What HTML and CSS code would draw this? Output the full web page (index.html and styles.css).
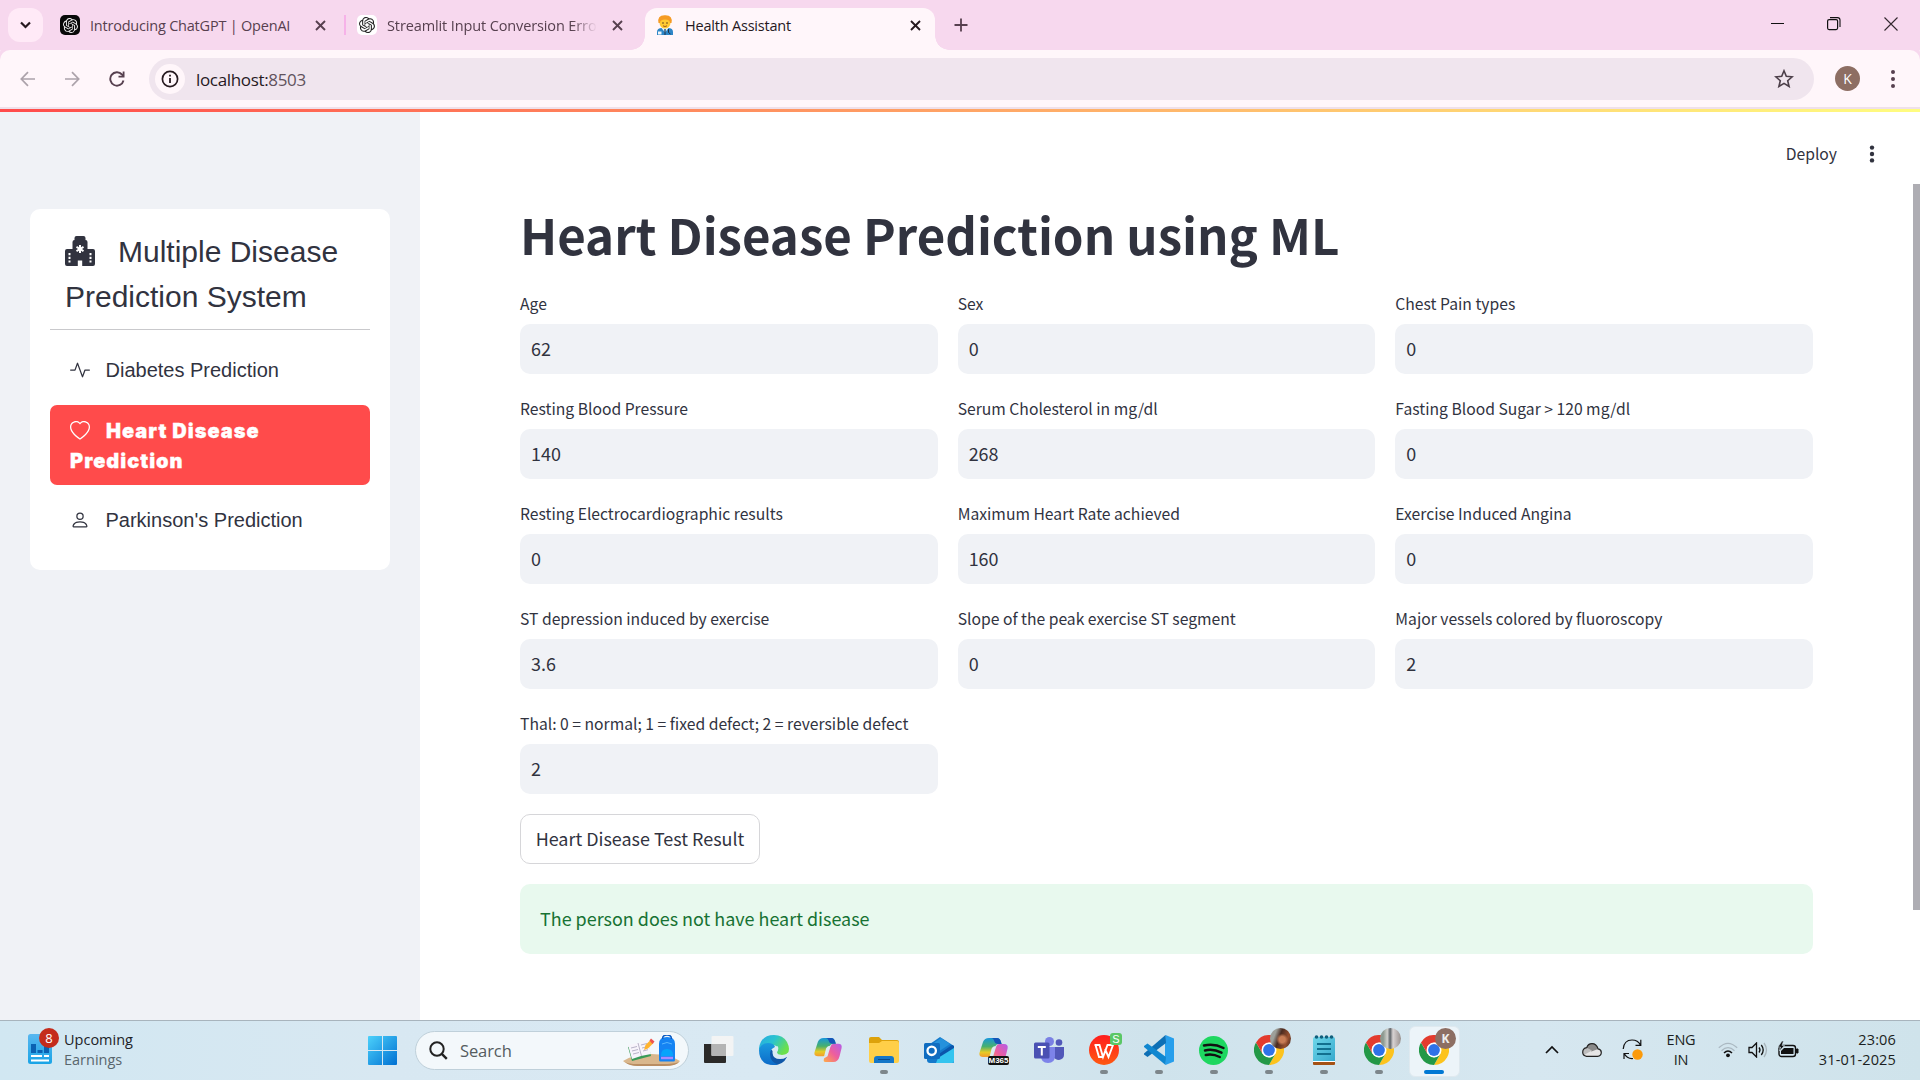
FILE: index.html
```html
<!DOCTYPE html>
<html lang="en">
<head>
<meta charset="utf-8">
<title>Health Assistant</title>
<link rel="stylesheet" href="styles.css">
</head>
<body>
<svg width="0" height="0" class="defs">
  <defs>
    <symbol id="openai" viewBox="0 0 24 24"><path fill="currentColor" d="M22.2819 9.8211a5.9847 5.9847 0 0 0-.5157-4.9108 6.0462 6.0462 0 0 0-6.5098-2.9A6.0651 6.0651 0 0 0 4.9807 4.1818a5.9847 5.9847 0 0 0-3.9977 2.9 6.0462 6.0462 0 0 0 .7427 7.0966 5.98 5.98 0 0 0 .511 4.9107 6.051 6.051 0 0 0 6.5146 2.9001A5.9847 5.9847 0 0 0 13.2599 24a6.0557 6.0557 0 0 0 5.7718-4.2058 5.9894 5.9894 0 0 0 3.9977-2.9001 6.0557 6.0557 0 0 0-.7475-7.0729zm-9.022 12.6081a4.4755 4.4755 0 0 1-2.8764-1.0408l.1419-.0804 4.7783-2.7582a.7948.7948 0 0 0 .3927-.6813v-6.7369l2.02 1.1686a.071.071 0 0 1 .038.052v5.5826a4.504 4.504 0 0 1-4.4945 4.4944zm-9.6607-4.1254a4.4708 4.4708 0 0 1-.5346-3.0137l.142.0852 4.783 2.7582a.7712.7712 0 0 0 .7806 0l5.8428-3.3685v2.3324a.0804.0804 0 0 1-.0332.0615L9.74 19.9502a4.4992 4.4992 0 0 1-6.1408-1.6464zM2.3408 7.8956a4.485 4.485 0 0 1 2.3655-1.9728V11.6a.7664.7664 0 0 0 .3879.6765l5.8144 3.3543-2.0201 1.1685a.0757.0757 0 0 1-.071 0l-4.8303-2.7865A4.504 4.504 0 0 1 2.3408 7.872zm16.5963 3.8558L13.1038 8.364 15.1192 7.2a.0757.0757 0 0 1 .071 0l4.8303 2.7913a4.4944 4.4944 0 0 1-.6765 8.1042v-5.6772a.79.79 0 0 0-.407-.667zm2.0107-3.0231l-.142-.0852-4.7735-2.7818a.7759.7759 0 0 0-.7854 0L9.409 9.2297V6.8974a.0662.0662 0 0 1 .0284-.0615l4.8303-2.7866a4.4992 4.4992 0 0 1 6.6802 4.66zM8.3065 12.863l-2.02-1.1638a.0804.0804 0 0 1-.038-.0567V6.0742a4.4992 4.4992 0 0 1 7.3757-3.4537l-.142.0805L8.704 5.459a.7948.7948 0 0 0-.3927.6813zm1.0976-2.3654l2.602-1.4998 2.6069 1.4998v2.9994l-2.5974 1.4997-2.6067-1.4997Z"/></symbol>
    <symbol id="close" viewBox="0 0 10 10"><path d="M.9.9l8.2 8.2M9.1.9L.9 9.1" stroke="currentColor" stroke-width="1.7"/></symbol>
    <symbol id="chrome" viewBox="0 0 30 30">
      <path d="M15 7.5H28A15 15 0 0 1 15 30L21.5 18.7Z" fill="#fcc31e"/>
      <path d="M2 7.5L8.5 18.7 15 22.5 21.3 19 15 30A15 15 0 0 1 2 7.5Z" fill="#239847"/>
      <path d="M2 7.5A15 15 0 0 1 28 7.5H15L8.5 11.3 8.5 18.7Z" fill="#e33b2e"/>
      <circle cx="15" cy="15" r="7.5" fill="#fff"/><circle cx="15" cy="15" r="5.9" fill="#2f72e8"/>
    </symbol>
    <linearGradient id="rb" x1="0" y1="0" x2="0" y2="1"><stop offset="0" stop-color="#1797dc"/><stop offset=".45" stop-color="#47b06d"/><stop offset=".75" stop-color="#e7cc25"/><stop offset="1" stop-color="#f39a2d"/></linearGradient>
    <linearGradient id="rp" x1="1" y1="0" x2="0" y2="1"><stop offset="0" stop-color="#b45de9"/><stop offset=".5" stop-color="#ee5e9d"/><stop offset="1" stop-color="#ffad45"/></linearGradient>
    <symbol id="copilot" viewBox="0 0 30 27">
      <path d="M20 7h5q4.500 0 3.600 4.500L26.500 20Q25 26 20 26h-8q-3 0-1.500-4L14 20l3-10q1-3 3-3Z" fill="url(#rp)"/>
      <path d="M10 1h8q3 0 4 4l.6 2H20q-3 0-4 3l-2.500 7q-1 3-4 3H4q-4.500 0-3.400-4.500L4 5Q5.500 1 10 1Z" fill="url(#rb)"/>
      <path d="M12 1h6q3 0 4 4l.6 2H19q-3 0-3.800-3Q14.500 1 12 1Z" fill="#1455b8"/>
      <path d="M17 9l-3.500 10-3 1 2-8q1-3 4.500-3Z" fill="#dcebf2"/>
    </symbol>
  </defs>
</svg>

<header class="tabs">
  <button class="tab-search"><svg width="11" height="8" viewBox="0 0 11 8"><path d="M1 1.500l4.500 4.500L10 1.500" fill="none" stroke="#26191f" stroke-width="2.200"/></svg></button>
  <div class="tab first"><span class="fav dark"><svg width="15" height="15"><use href="#openai"/></svg></span><span class="tt t1">Introducing ChatGPT | OpenAI</span><svg class="x" width="11" height="11"><use href="#close"/></svg></div>
  <i class="sep"></i>
  <div class="tab second"><span class="fav light"><svg width="16" height="16"><use href="#openai"/></svg></span><span class="tt t2">Streamlit Input Conversion Error</span><svg class="x" width="11" height="11"><use href="#close"/></svg></div>
  <div class="tab active">
    <svg class="doc" width="18" height="21" viewBox="0 0 18 21"><path d="M1 20v-3q0-4 5-4h6q5 0 5 4v3Z" fill="#2d86c7"/><path d="M5.500 13L9 17.500 12.500 13Z" fill="#e9f3f8"/><path d="M8.300 14h1.400v6H8.300Z" fill="#24496b"/><rect x="2" y="16.500" width="3.500" height="3" fill="#f0f6fa"/><path d="M12.500 14v3.500l2 1.500" stroke="#1d2e41" fill="none"/><circle cx="9" cy="8" r="5.500" fill="#ffcb32"/><path d="M2.500 8Q1 0 9 .3 17 0 15.500 8L14 8Q14 4.500 9 4.500T4 8Z" fill="#f59b24"/><circle cx="7" cy="8" r=".8" fill="#5b3b17"/><circle cx="11" cy="8" r=".8" fill="#5b3b17"/><path d="M7 10.800q2 1.500 4 0" stroke="#a45a16" fill="none"/></svg>
    <span class="tt t3">Health Assistant</span><svg class="x" width="11" height="11"><use href="#close"/></svg>
  </div>
  <svg class="plus" width="14" height="14" viewBox="0 0 14 14"><path d="M7 .5v13M.5 7h13" stroke="#57404f" stroke-width="1.800"/></svg>
  <div class="win">
    <svg width="14" height="14" viewBox="0 0 14 14"><path d="M1 6.500h13" stroke="#111"/></svg>
    <svg width="14" height="14" viewBox="0 0 14 14"><rect x=".6" y="2.600" width="10" height="10" rx="1.500" fill="none" stroke="#111" stroke-width="1.200"/><path d="M3 .6h7.500q2.500 0 2.500 2.500V10" fill="none" stroke="#111" stroke-width="1.100"/></svg>
    <svg width="14" height="14" viewBox="0 0 14 14"><path d="M.5.5l13 13M13.500.5l-13 13" stroke="#33272e" stroke-width="1.100"/></svg>
  </div>
</header>

<nav class="toolbar">
  <svg class="nav" width="16" height="16" viewBox="0 0 16 16"><path d="M15 8H1.500M8 1.200L1.300 8 8 14.800" fill="none" stroke="#aca2aa" stroke-width="1.700"/></svg>
  <svg class="nav" width="16" height="16" viewBox="0 0 16 16"><path d="M0 8h13.500M7 1.200L13.700 8 7 14.800" fill="none" stroke="#aca2aa" stroke-width="1.700"/></svg>
  <svg class="nav" width="16" height="16" viewBox="0 0 16 16"><path d="M14.500 9.500A6.700 6.700 0 1 1 13 3.500L14.500 5" fill="none" stroke="#57404f" stroke-width="1.900"/><path d="M15.500.5v6H9.500V4.800H13.700V.5Z" fill="#57404f"/></svg>
  <div class="url">
    <span class="info"><svg width="18" height="18" viewBox="0 0 18 18"><circle cx="9" cy="9" r="7.600" fill="none" stroke="#26191f" stroke-width="1.700"/><path d="M9 8v5M9 4.800v1.800" stroke="#26191f" stroke-width="1.800"/></svg></span>
    <span class="addr">localhost:<b>8503</b></span>
    <svg class="star" width="20" height="19" viewBox="0 0 20 19"><path d="M10 1.800l2.300 5.500 5.900.5-4.500 3.900 1.400 5.800-5.100-3.100-5.100 3.100 1.400-5.800L1.800 7.800l5.900-.5Z" fill="none" stroke="#4c3f49" stroke-width="1.600"/></svg>
  </div>
  <span class="avatar">K</span>
  <svg class="kebab" width="4" height="18" viewBox="0 0 4 18"><g fill="#57404f"><circle cx="2" cy="2" r="2"/><circle cx="2" cy="9" r="2"/><circle cx="2" cy="16" r="2"/></g></svg>
</nav>
<div class="rainbow"></div>

<div class="app">
  <aside class="side">
    <div class="menu">
      <h2 class="menu-title"><svg width="30" height="30" viewBox="0 0 30 30"><path fill="#31333f" fill-rule="evenodd" d="M9.500 4V2Q9.500 0 11.500 0h7q2 0 2 2v2q2 0 2 2v7H28q2 0 2 2v13q0 2-2 2H17.200v-5.500h-4.400V30H2q-2 0-2-2V15q0-2 2-2h5.500V6q0-2 2-2ZM14 9v2.200l-2-1.100-1 1.700 2 1.200-2 1.200 1 1.700 2-1.100V17h2v-2.200l2 1.100 1-1.700-2-1.200 2-1.200-1-1.700-2 1.100V9ZM3.500 17v2.200h2V17Zm0 3.700v2.200h2v-2.200Zm0 3.700v2.200h2v-2.200ZM24.500 17v2.200h2V17Zm0 3.700v2.200h2v-2.200Zm0 3.700v2.200h2v-2.200Z"/></svg>Multiple Disease Prediction System</h2>
      <a class="link"><svg width="20" height="20" viewBox="0 0 16 16"><path d="M6 2a.5.5 0 0 1 .47.33L10 12.036l1.530-4.208A.5.5 0 0 1 12 7.500h3.500a.5.5 0 0 1 0 1h-3.150l-1.880 5.170a.5.5 0 0 1-.94 0L6 3.964 4.470 8.171A.5.5 0 0 1 4 8.500H.5a.5.5 0 0 1 0-1h3.150l1.880-5.170A.5.5 0 0 1 6 2"/></svg>Diabetes Prediction</a>
      <a class="link on"><svg width="20" height="20" viewBox="0 0 16 16"><path d="m8 2.748-.717-.737C5.600.281 2.514.878 1.400 3.053c-.523 1.023-.641 2.500.314 4.385.92 1.815 2.834 3.989 6.286 6.357 3.452-2.368 5.365-4.542 6.286-6.357.955-1.886.838-3.362.314-4.385C13.486.878 10.400.28 8.717 2.010zM8 15C-7.333 4.868 3.279-3.040 7.824 1.143q.09.083.176.171a3 3 0 0 1 .176-.17C12.720-3.042 23.333 4.867 8 15"/></svg>Heart Disease Prediction</a>
      <a class="link"><svg width="20" height="20" viewBox="0 0 16 16"><path d="M8 8a3 3 0 1 0 0-6 3 3 0 0 0 0 6m2-3a2 2 0 1 1-4 0 2 2 0 0 1 4 0m4 8c0 1-1 1-1 1H3s-1 0-1-1 1-4 6-4 6 3 6 4m-1-.004c-.001-.246-.154-.986-.832-1.664C11.516 10.680 10.289 10 8 10s-3.516.68-4.168 1.332c-.678.678-.83 1.418-.832 1.664z"/></svg>Parkinson's Prediction</a>
    </div>
  </aside>
  <main class="main">
    <div class="top"><span>Deploy</span><svg width="6" height="18" viewBox="0 0 6 18"><g fill="#31333f"><circle cx="3" cy="2.600" r="2.200"/><circle cx="3" cy="9" r="2.200"/><circle cx="3" cy="15.400" r="2.200"/></g></svg></div>
    <h1>Heart Disease Prediction using ML</h1>
    <div class="form">
      <label>Age<span class="input">62</span></label>
      <label>Sex<span class="input">0</span></label>
      <label>Chest Pain types<span class="input">0</span></label>
      <label>Resting Blood Pressure<span class="input">140</span></label>
      <label>Serum Cholesterol in mg/dl<span class="input">268</span></label>
      <label>Fasting Blood Sugar &gt; 120 mg/dl<span class="input">0</span></label>
      <label>Resting Electrocardiographic results<span class="input">0</span></label>
      <label>Maximum Heart Rate achieved<span class="input">160</span></label>
      <label>Exercise Induced Angina<span class="input">0</span></label>
      <label>ST depression induced by exercise<span class="input">3.6</span></label>
      <label>Slope of the peak exercise ST segment<span class="input">0</span></label>
      <label>Major vessels colored by fluoroscopy<span class="input">2</span></label>
      <label>Thal: 0 = normal; 1 = fixed defect; 2 = reversible defect<span class="input">2</span></label>
    </div>
    <button class="btn">Heart Disease Test Result</button>
    <div class="alert">The person does not have heart disease</div>
    <i class="scroll"></i>
  </main>
</div>

<footer class="taskbar">
  <div class="widget">
    <svg width="24" height="30" viewBox="0 0 24 30"><defs><linearGradient id="wg" x1="0" y1="0" x2="0" y2="1"><stop offset="0" stop-color="#58b7f0"/><stop offset="1" stop-color="#1aa4e6"/></linearGradient></defs><rect width="24" height="30" rx="2.500" fill="url(#wg)"/><path d="M3 10h5v9H3ZM9.500 16h5v3h-5ZM16 10h5v9h-5Z" fill="#0b62b2"/><path d="M3 22h11M16 22h5M3 26.500h18" stroke="#fff" stroke-width="2"/></svg>
    <span class="badge">8</span>
    <p>Upcoming<small>Earnings</small></p>
  </div>
  <svg class="start" width="29" height="29" viewBox="0 0 29 29"><defs><linearGradient id="win" x1="0" y1="0" x2="1" y2="1"><stop offset="0" stop-color="#4cd1fb"/><stop offset="1" stop-color="#0070d2"/></linearGradient></defs><path fill="url(#win)" d="M1 0h13v14H0V1Q0 0 1 0ZM15 0h13q1 0 1 1v13H15ZM0 15h14v14H1q-1 0-1-1ZM15 15h14v13q0 1-1 1H15Z"/></svg>
  <div class="search">
    <svg width="19" height="19" viewBox="0 0 19 19"><circle cx="8" cy="8" r="6.700" fill="none" stroke="#222" stroke-width="2"/><path d="M12.800 12.800l5 5" stroke="#222" stroke-width="2.400"/></svg>
    <span>Search</span>
    <svg class="pic" width="58" height="32" viewBox="0 0 58 32"><path d="M0 26Q12 18.500 28 19q18 0 29 7-3 5-16 5H14Q4 30 0 26Z" fill="#d9b78d"/><path d="M2 27q4 4 13 4h26q12 0 15-4-6 2-16 2H14Q6 29 2 27Z" fill="#b98d62"/><path d="M5 12l20-5 3 14-19 5Z" fill="#399b58"/><path d="M5 10l10-2 10-3 3 14-10 2-9 3Z" fill="#f7f4fb"/><path d="M15 8l3.500 13M8 13l6-1.500M9 16l6-1.500M10 19l6-1.500M18 10l6-1.500M19 13l6-1.500M20 16l5-1.300" stroke="#b9b3c8" fill="none"/><path d="M21 15l1.500-5 5-5 3 3-5.500 5.500Z" fill="#ffb330"/><path d="M26.500 5.500L28 3.500l3.500 3L29.500 9Z" fill="#ef5350"/><path d="M36 25V9q0-7 8-7t8 7v16q0 1.500-1.500 1.500h-13Q36 26.500 36 25Z" fill="#1583f3"/><path d="M39.500 4q0-4 4.500-4t4.500 4" fill="none" stroke="#0a59c0" stroke-width="1.500"/><path d="M38 21v-1q0-6 6-6t6 6v1Z" fill="#08a4fb"/><path d="M38 23h12" stroke="#a98bff" stroke-width="2.500"/><path d="M39 9q5-3 10 0" stroke="#59b7ff" fill="none"/></svg>
  </div>
  <div class="apps">
    <span class="app-i"><svg width="30" height="30" viewBox="0 0 30 30"><path d="M0 9h22v18q0 1-1 1H1q-1 0-1-1Z" fill="#2b2a29"/><rect x="7.500" y="1" width="22" height="20" rx="1" fill="#f4f4f4" fill-opacity=".96"/><path d="M7.500 9H22v12H8.500q-1 0-1-1Z" fill="#b4b4b4"/></svg></span>
    <span class="app-i"><svg width="30" height="30" viewBox="0 0 30 30"><defs><linearGradient id="e1" x1="0" y1="0" x2="1" y2=".5"><stop offset="0" stop-color="#28a8e4"/><stop offset=".5" stop-color="#2ac4cf"/><stop offset="1" stop-color="#6be04b"/></linearGradient><linearGradient id="e2" x1="0" y1="0" x2="0" y2="1"><stop offset="0" stop-color="#1b9bdf"/><stop offset="1" stop-color="#0c6bc9"/></linearGradient></defs><path d="M4 10Q14 14 16 20l12 2q-4 8-13 8Q4 29 2 20Z" fill="#0f57a8"/><path d="M0 13Q2 0 15 0q9 0 13 7 2 4 2 7 0 6-7 6-5 0-5-2.500 0-1 1-2.500.6-4-5-5Q6 9 0 15Z" fill="url(#e1)"/><path d="M0 15Q2 8 9 8q6 0 7 4-5 2-5 7 0 8 8 10.500-2 .5-4 .5Q0 30 0 15Z" fill="url(#e2)"/><path d="M18.500 11q1.500 2 .5 4-1.200 1.500-1 2.500 0 2.500 5 2.500 4 0 6.500-2.500-.3 4-2.500 5-2 1.500-6 1.500-7 0-7.500-6-.2-4 3-6Z" fill="#daeaf3"/></svg></span>
    <span class="app-i"><svg width="29" height="26" viewBox="0 0 30 27"><use href="#copilot"/></svg></span>
    <span class="app-i run"><svg width="30" height="27" viewBox="0 0 30 27"><path d="M0 2Q0 0 2 0h8l3 3h15q2 0 2 2v8H0Z" fill="#dda20b"/><path d="M0 6h10l3-2h15q2 0 2 2v18q0 2-2 2H2q-2 0-2-2Z" fill="#ffcf48"/><path d="M5 26v-4q0-3 3-3h14q3 0 3 3v4Z" fill="#1577c8"/><path d="M9 22.500h12" stroke="#0a4b8b"/></svg></span>
    <span class="app-i"><svg width="30" height="27" viewBox="0 0 30 27"><path d="M3 9L16 0l14 9v16q0 1-1 1H6q-3 0-3-3Z" fill="#1479cb"/><path d="M7 8l10-7 9 6-12 8Z" fill="#2591dc"/><path d="M12 19L28 8l2 1v8L16 26Z" fill="#0b56ab"/><path d="M14 21l16-10v13q0 2-2 2H12Z" fill="#34c4ef"/><rect y="6" width="16" height="16" rx="1.500" fill="#0f6cc0"/><circle cx="7.700" cy="13.800" r="4.200" fill="none" stroke="#fff" stroke-width="2.300"/></svg></span>
    <span class="app-i"><svg width="30" height="27" viewBox="0 0 30 27"><use href="#copilot"/></svg><em class="m365">M365</em></span>
    <span class="app-i"><svg width="30" height="27" viewBox="0 0 30 27"><circle cx="25" cy="5.500" r="3.300" fill="#5258b9"/><path d="M19 10h11v8q0 4-5 5-4 0-6-4Z" fill="#5258b9"/><circle cx="15.500" cy="4.500" r="4.500" fill="#7a80e4"/><path d="M7 10h14v9q0 7-7 7T7 19Z" fill="#7d83e9"/><rect y="5.500" width="15.500" height="16" rx="1.500" fill="#4a51b3"/><path d="M3.800 10h8M7.800 10v8.500" stroke="#fff" stroke-width="2"/></svg></span>
    <span class="app-i run"><svg width="30" height="30" viewBox="0 0 30 30"><defs><linearGradient id="wp" x1="0" y1="0" x2="0" y2="1"><stop offset="0" stop-color="#ff1d1d"/><stop offset="1" stop-color="#ff5a12"/></linearGradient></defs><circle cx="15" cy="15" r="15" fill="url(#wp)"/><path d="M5.500 10h5l3.500 12 4.500-12h5.500L19.500 22l-3.500-8M6.500 10l3.500 12h4" fill="none" stroke="#fff" stroke-width="1.900"/></svg><em class="s">S</em></span>
    <span class="app-i run"><svg width="30" height="30" viewBox="0 0 30 30"><path d="M21.500 0L30 3.500v23L21.500 30 21 22V8Z" fill="#279fec"/><path d="M21.500 0L22 8 3.500 22 0 19.500v-1Z" fill="#0d6fb5"/><path d="M0 11l3.500-2.500L22 22l-.5 8L0 12Z" fill="#1087d0"/></svg></span>
    <span class="app-i run"><svg width="29" height="29" viewBox="0 0 29 29"><circle cx="14.500" cy="14.500" r="14.500" fill="#1ed760"/><path d="M5 9.500q10-2.500 19.500 2.500M6 14.500q8-2 16.500 2.200M6.800 19q7-1.500 14 2" fill="none" stroke="#111" stroke-width="2.500" stroke-linecap="round"/></svg></span>
    <span class="app-i run"><svg width="30" height="30"><use href="#chrome"/></svg><em class="ph p1"></em></span>
    <span class="app-i run"><svg width="22" height="30" viewBox="0 0 22 30"><defs><linearGradient id="np" x1="0" y1="0" x2="1" y2="1"><stop offset="0" stop-color="#6fd7ea"/><stop offset="1" stop-color="#37a9cd"/></linearGradient></defs><path d="M0 25h22v4q0 1-1 1H1q-1 0-1-1Z" fill="#a45114"/><path d="M0 24h22v3H0Z" fill="#fff"/><path d="M0 4q0-2 2-2h18q2 0 2 2v22H0Z" fill="url(#np)"/><g fill="#125f7c"><circle cx="3.500" cy="2" r="1.800"/><circle cx="8.500" cy="2" r="1.800"/><circle cx="13.500" cy="2" r="1.800"/><circle cx="18.500" cy="2" r="1.800"/></g><path d="M4 9h14M4 14h14M4 19h14" stroke="#12708f" stroke-width="1.800"/></svg></span>
    <span class="app-i run"><svg width="30" height="30"><use href="#chrome"/></svg><em class="ph p2"></em></span>
    <span class="app-i run cur"><svg width="30" height="30"><use href="#chrome"/></svg><em class="ph pk">K</em></span>
  </div>
  <div class="tray">
    <svg class="chev" width="14" height="9" viewBox="0 0 14 9"><path d="M1 8l6-6 6 6" fill="none" stroke="#111" stroke-width="1.700"/></svg>
    <svg class="cloud" width="20" height="14" viewBox="0 0 20 14"><path d="M4.500 13.300h11q3.800-.3 3.800-3.800 0-3-3.200-3.600Q14.500.7 10 .7 6 .7 4.700 4.700 .7 5.300.7 9.300q0 3.500 3.800 4Z" fill="#e6e6e6"/><path d="M4.700 4.700Q6 .7 10 .7q4.500 0 6.100 5.200L9.500 8.500Z" fill="#8a8a8a"/><path d="M.9 10Q.7 5.300 4.700 4.700L10 7.500 2 12Z" fill="#bdbdbd"/><path d="M4.500 13.300h11q3.800-.3 3.800-3.800 0-3-3.200-3.600Q14.500.7 10 .7 6 .7 4.700 4.700 .7 5.300.7 9.300q0 3.500 3.800 4Z" fill="none" stroke="#222" stroke-width="1.200"/></svg>
    <svg class="sync" width="21" height="21" viewBox="0 0 21 21"><path d="M1.200 10Q2 1 10 1q6 0 8.500 5M18.800.8V6.300H13.500M11 19.500Q5 20 2.200 14.500M2 20v-5.500h5" fill="none" stroke="#111" stroke-width="1.200"/><circle cx="15.500" cy="15.500" r="5.200" fill="#fb9a0b"/></svg>
    <p class="lang">ENG<br>IN</p>
    <svg class="wifi" width="20" height="16" viewBox="0 0 20 16"><g fill="none"><path d="M.8 5.800q9.200-9 18.400 0M3.500 8.700q6.500-6 13 0" stroke="#abb9c2" stroke-width="1.200"/><path d="M6 11q4-4 8 0" stroke="#111" stroke-width="1.500"/></g><circle cx="10" cy="13.300" r="1.900" fill="#111"/></svg>
    <svg class="vol" width="20" height="16" viewBox="0 0 20 16"><path d="M1 5.500h3L8.500 1v14L4 10.500H1Z" fill="none" stroke="#111" stroke-width="1.300"/><path d="M11 5.500q2 2.500 0 5M13.300 3q3.800 5 0 10" fill="none" stroke="#111" stroke-width="1.300"/><path d="M16 1q5 7 0 14" fill="none" stroke="#a9b5bc" stroke-width="1.300"/></svg>
    <svg class="bat" width="21" height="17" viewBox="0 0 21 17"><rect x="1" y="4.500" width="16.500" height="11" rx="2.500" fill="#d3e6f0" stroke="#111" stroke-width="1.400"/><path d="M6 7h9.500v6H3v-3Z" fill="#111"/><path d="M18.500 8h1.500v4h-1.500Z" fill="#111" stroke="#111"/><path d="M4 0L0 6h2.500L1.500 10 6.500 4.500H4L5.500 0Z" fill="#111" stroke="#d3e6f0" stroke-width=".6"/></svg>
    <p class="clock">23:06<br>31-01-2025</p>
  </div>
</footer>
</body>
</html>
```
FILE: styles.css
```css
* { box-sizing: border-box; }
body { margin: 0; width: 1920px; height: 1080px; overflow: hidden; background: #fff; font-family: "Open Sans", "Noto Sans", sans-serif; display: flex; flex-direction: column; }
svg { flex: none; display: block; }
button { font: inherit; border: 0; padding: 0; }
p, h1, h2 { margin: 0; font-weight: 400; }
.defs { position: absolute; }

/* browser tabs */
.tabs { height: 50px; flex: none; background: #f7d8ee; display: flex; align-items: flex-start; color: #57404f; }
.tab-search { width: 35px; height: 34px; margin: 8px 0 0 8px; border-radius: 12px; background: #ffeaf7; display: flex; align-items: center; justify-content: center; }
.tab { height: 34px; margin-top: 8px; display: flex; align-items: center; }
.first { margin-left: 17px; width: 284px; }
.second { margin-left: 11px; width: 288px; }
.fav { width: 20px; height: 20px; border-radius: 5px; display: flex; align-items: center; justify-content: center; }
.dark { background: #080808; color: #eee; }
.light { background: #fff; color: #222; }
.tt { margin-left: 10px; padding-top: 2px; font-size: 14.5px; white-space: nowrap; overflow: hidden; line-height: 24px; }
.t1 { width: 225px; letter-spacing: -.21px; }
.t2 { width: 210px; letter-spacing: -.12px; -webkit-mask-image: linear-gradient(90deg, #000 88%, transparent); mask-image: linear-gradient(90deg, #000 88%, transparent); }
.t3 { width: 225px; margin-left: 11px; letter-spacing: -.2px; color: #26191f; }
.second .x { margin-left: 15px; }
.sep { width: 2px; height: 20px; background: #f6b2e8; margin-top: 15px; }
.active { position: relative; width: 290px; height: 42px; background: #fff6fa; border-radius: 12px 12px 0 0; padding: 0 0 8px 11px; color: #26191f; }
.active::before, .active::after { content: ""; position: absolute; bottom: 0; width: 14px; height: 14px; }
.active::before { left: -14px; background: radial-gradient(circle at 0 0, transparent 13.5px, #fff6fa 14px); }
.active::after { right: -14px; background: radial-gradient(circle at 100% 0, transparent 13.5px, #fff6fa 14px); }
.plus { margin: 18px 0 0 19px; }
.win { display: flex; gap: 43px; margin: 17px 22px 0 auto; }

/* address bar */
.toolbar { height: 59px; flex: none; background: #fff6fa; border-bottom: 2px solid #efe0ea; box-shadow: 0 -8px 0 #f7d8ee; border-radius: 10px 10px 0 0; display: flex; align-items: center; padding: 0 25px 0 20px; }
.nav { margin-right: 29px; }
.nav:nth-child(3) { margin-right: 24px; margin-left: -1px; }
.url { width: 1665px; height: 42px; border-radius: 21px; background: #f0e5ee; display: flex; align-items: center; padding: 0 20px 0 6px; }
.info { width: 30px; height: 30px; border-radius: 50%; background: #fff6fa; display: flex; align-items: center; justify-content: center; }
.addr { margin-left: 11px; flex: 1; padding-top: 1px; font-size: 17px; letter-spacing: -.34px; color: #26191f; }
.addr b { font-weight: 400; color: #61525c; }
.avatar { width: 25px; height: 25px; margin-left: 21px; border-radius: 50%; background: #8d6e63; color: #fff; font-size: 14px; line-height: 25px; text-align: center; }
.kebab { margin-left: auto; }
.rainbow { height: 3px; flex: none; background: linear-gradient(90deg, #ff4b4b, #fffd80); }

/* application */
.app { height: 908px; flex: none; display: flex; color: #31333f; }
.side { width: 420px; background: #f0f2f6; padding: 97px 30px 0; }
.menu { height: 361px; border-radius: 10px; background: #fff; padding: 20px; font-family: "Liberation Sans", Arial, sans-serif; }
.menu-title { font-size: 30px; line-height: 45px; padding: 0 15px 10px; height: 101px; border-bottom: 1px solid #c9c9cc; }
.menu-title svg { display: inline-block; margin-right: 23px; vertical-align: -4px; }
.link { display: block; font-size: 20px; line-height: 30px; padding: 10px 20px; }
.link svg { display: inline-block; margin-right: 15.5px; vertical-align: -3px; fill: #31333f; }
.menu-title + .link { margin-top: 15px; }
.on { margin: 10px 0; padding: 11px 20px 9px; border-radius: 7px; background: #ff4b4b; color: #fff; font-family: Inter, "Liberation Sans", sans-serif; font-weight: 900; letter-spacing: 1px; -webkit-text-stroke: .3px #fff; }
.on svg { fill: #fff; margin-right: 16px; }
.main { position: relative; flex: 1; padding: 0 107px 0 100px; font-family: "Noto Sans CJK JP", sans-serif; font-size: 17.94px; }
.top { height: 84px; display: flex; align-items: center; justify-content: flex-end; gap: 32px; margin-right: -62px; font-size: 15.7px; }
.top span { padding-bottom: 2px; }
h1 { font-weight: 700; font-size: 49.2px; line-height: 66px; height: 93px; padding-top: 5px; white-space: nowrap; }
.form { display: grid; grid-template-columns: repeat(3, 1fr); gap: 20px; }
.form label { height: 85px; font-size: 15.7px; line-height: 30px; white-space: nowrap; }
.input { display: flex; align-items: center; height: 50px; margin-top: 5px; padding: 0 0 2px 11px; border-radius: 10px; background: #f0f2f6; font-size: 17.94px; }
.btn { display: block; width: 240px; height: 50px; margin-top: 20px; padding-bottom: 2px; border: 1px solid #d6d6d9; border-radius: 10px; background: #fff; color: #31333f; white-space: nowrap; }
.alert { height: 70px; margin-top: 20px; padding-left: 20px; border-radius: 10px; background: #e8f9ee; color: #177233; line-height: 68px; }
.scroll { position: absolute; right: 0; top: 72px; width: 7px; height: 726px; background: #aeadb3; }

/* taskbar */
.taskbar { height: 60px; flex: none; border-top: 1px solid #a8b4bd; background: linear-gradient(90deg, #d1e7f2, #d8e8f2 20%, #d9e9f3 40%, #cfe3ec 60%, #d6e7f0 80%, #cfe3eb); display: flex; }
.widget { position: relative; width: 368px; padding: 13px 0 0 28px; display: flex; }
.badge { position: absolute; left: 39px; top: 7px; width: 20px; height: 20px; border-radius: 50%; background: #c42b1c; color: #fff; font-size: 13px; line-height: 20px; text-align: center; }
.widget p { margin: -4px 0 0 12px; font-size: 14.5px; line-height: 20px; color: #1d2327; letter-spacing: 0; }
.widget small { display: block; font-size: 14.5px; color: #59666d; }
.start { margin-top: 15px; }
.search { width: 274px; height: 39px; margin: 10px 0 0 18px; border: 1px solid #bfd0da; border-radius: 20px; background: #f3f8fb; display: flex; align-items: center; padding: 0 7px 0 13px; }
.search span { margin-left: 12px; flex: 1; font-size: 16.5px; color: #555c60; letter-spacing: -.1px; }
.apps { display: flex; margin-left: 2px; }
.app-i { position: relative; width: 55px; height: 58px; display: flex; align-items: center; justify-content: center; }
.run::after { content: ""; position: absolute; left: 23.5px; bottom: 5px; width: 8px; height: 4px; border-radius: 2px; background: #7d868b; }
.cur::before { content: ""; position: absolute; left: 3px; top: 5px; width: 49px; height: 49px; border-radius: 6px; background: #ecf4f9; border: 1px solid #dfe9ef; }
.cur svg { position: relative; }
.cur::after { left: 17.5px; width: 20px; background: #0078d4; }
.app-i em { position: absolute; font-style: normal; }
.app-i .m365 { left: 22px; top: 35px; width: 21px; height: 9px; border-radius: 2px; background: #111; color: #fff; font: 700 8px/9px "Liberation Sans", sans-serif; text-align: center; }
.app-i .s { left: 34px; top: 12px; width: 12px; height: 12px; border-radius: 3px; background: #5ac765; color: #fff; font: 11px/12px "Liberation Sans", sans-serif; text-align: center; }
.ph { left: 29px; top: 7px; width: 21px; height: 21px; border-radius: 50%; }
.p1 { background: radial-gradient(circle at 58% 55%, #c87d55 0 18%, transparent 35%), linear-gradient(110deg, #9da09a 25%, #4b2b20 45%, #99502e 75%, #3c2a25); }
.p2 { background: linear-gradient(90deg, #8c9990 15%, #d0d0cc 35%, #5c6267 48%, #d8d3d3 62%, #98908e); }
.app-i .pk { background: #8d6e63; color: #eee; font: 700 12px/21px "Open Sans", sans-serif; text-align: center; }
.tray { margin-left: auto; padding-right: 24px; display: flex; align-items: center; height: 57px; font-size: 14.5px; line-height: 20px; color: #1b1f22; }
.cloud { margin-left: 23px; }
.sync { margin-left: 20px; }
.lang { width: 40px; margin-left: 18px; text-align: center; letter-spacing: -.2px; }
.wifi { margin-left: 17px; }
.vol { margin-left: 10px; }
.bat { margin-left: 10px; }
.clock { width: 97px; text-align: right; letter-spacing: .15px; }
```
